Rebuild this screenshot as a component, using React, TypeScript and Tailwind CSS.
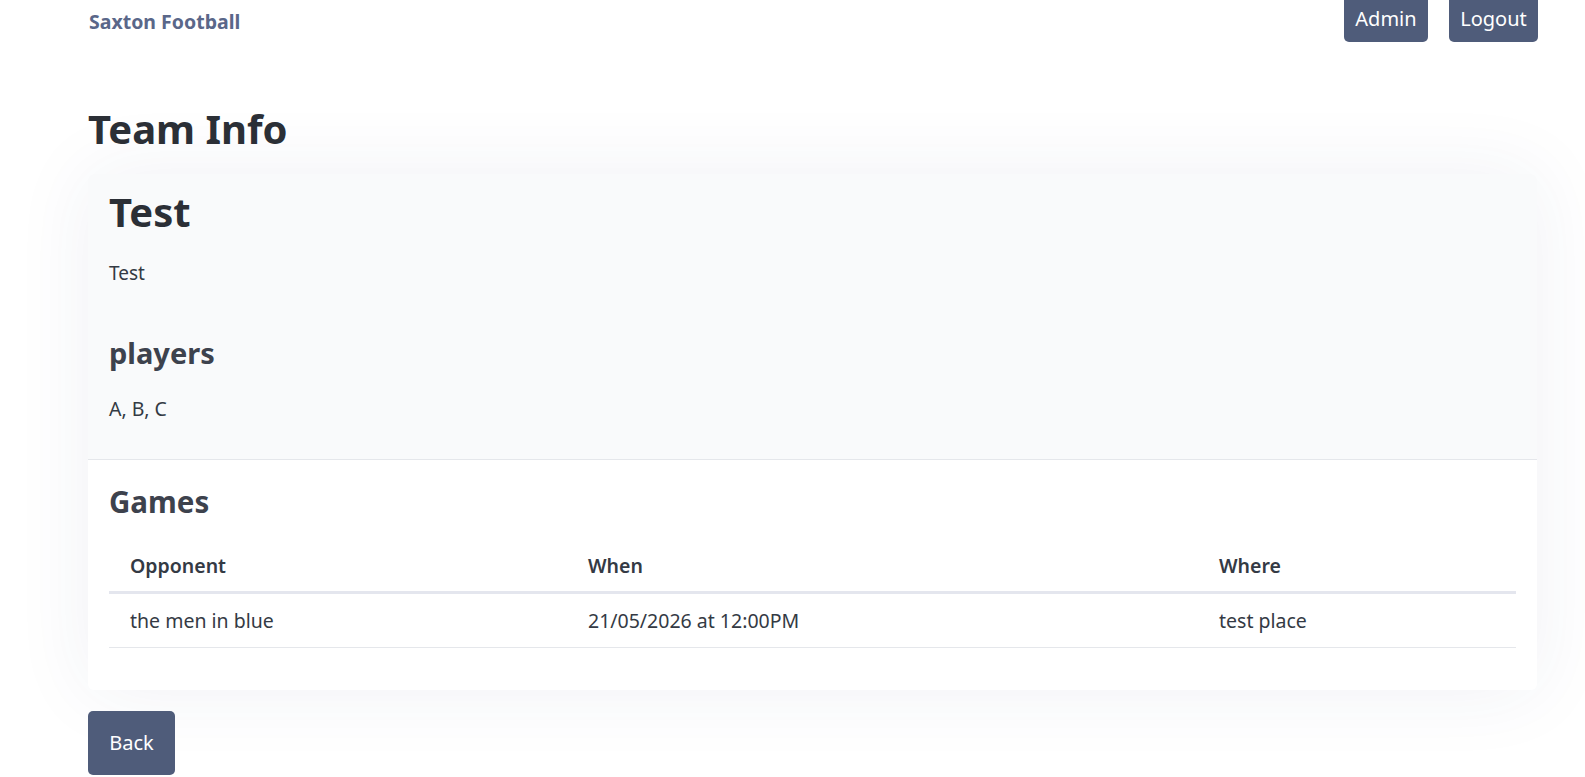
const games = [
  { opponent: "the men in blue", when: "21/05/2026 at 12:00PM", where: "test place" },
];

const NavButton = ({ label, width }: { label: string; width: string }) => (
  <button className={`h-[42px] ${width} rounded-b-[5px] bg-[#4f5c7a] text-[20px] leading-[30px] text-white pb-[5px]`}>
    {label}
  </button>
);

export default function App() {
  return (
    <div className="min-h-screen bg-white text-[#343a44] font-['Noto_Sans',sans-serif] overflow-hidden">
      <header className="flex items-start justify-between pl-[89px] pr-[47px]">
        <a className="mt-[8px] text-[19.5px] leading-[28px] font-bold text-[#5a6789]">Saxton Football</a>
        <div className="flex gap-[21px]">
          <NavButton label="Admin" width="w-[84px]" />
          <NavButton label="Logout" width="w-[89px]" />
        </div>
      </header>

      <main className="pl-[88px] pr-[48px] pt-[61px]">
        <h1 className="text-[40px] leading-[52px] font-bold text-[#2b2f36]">Team Info</h1>

        <section className="mt-[19px] rounded-[6px] bg-white shadow-[0_0_80px_rgba(40,50,110,0.07)]">
          <div className="rounded-t-[6px] bg-[#f9fafb] px-[21px] pt-[11px] pb-[35px] border-b border-[#e5e7eb]">
            <h2 className="text-[40px] leading-[53px] font-bold text-[#2b2f36]">Test</h2>
            <p className="mt-[20px] text-[19px] leading-[30px]">Test</p>
            <h3 className="mt-[47px] text-[29px] leading-[36px] font-bold text-[#3d424d]">players</h3>
            <p className="mt-[23px] text-[19.5px] leading-[30px]">A, B, C</p>
          </div>

          <div className="px-[21px] pt-[24px] pb-[42px]">
            <h3 className="text-[29.5px] leading-[36px] font-bold text-[#3d424d]">Games</h3>
            <table className="mt-[20px] w-full table-fixed text-left text-[19.5px] leading-[30px]">
              <colgroup>
                <col className="w-[458px]" />
                <col className="w-[631px]" />
                <col />
              </colgroup>
              <thead>
                <tr className="border-b-[3px] border-[#e4e6ee]">
                  <th className="px-[21px] pt-[11px] pb-[10px] font-semibold">Opponent</th>
                  <th className="px-[21px] pt-[11px] pb-[10px] font-semibold">When</th>
                  <th className="px-[21px] pt-[11px] pb-[10px] font-semibold">Where</th>
                </tr>
              </thead>
              <tbody>
                {games.map((g) => (
                  <tr key={g.opponent} className="border-b border-[#e5e7eb]">
                    <td className="px-[21px] pt-[12px] pb-[11px]">{g.opponent}</td>
                    <td className="px-[21px] pt-[12px] pb-[11px]">{g.when}</td>
                    <td className="px-[21px] pt-[12px] pb-[11px]">{g.where}</td>
                  </tr>
                ))}
              </tbody>
            </table>
          </div>
        </section>

        <button className="mt-[21px] h-[64px] w-[87px] rounded-[5px] bg-[#4f5c7a] text-[20px] text-white">
          Back
        </button>
      </main>
    </div>
  );
}
